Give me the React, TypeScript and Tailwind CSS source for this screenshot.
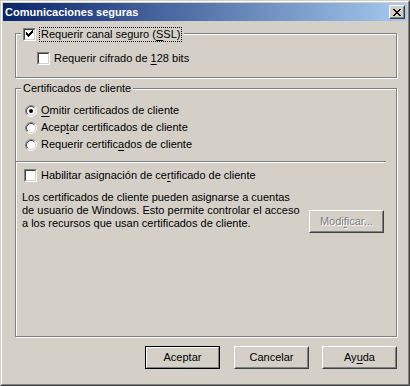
import React from "react";

const FACE = "#D4D0C8";

function Check({ checked = false }: { checked?: boolean }) {
  const rows: [number, number, number][] = [
    [7, 1, 1],
    [6, 2, 2],
    [1, 3, 1],
    [5, 3, 3],
    [1, 4, 2],
    [4, 4, 3],
    [1, 5, 5],
    [2, 6, 3],
    [3, 7, 1],
  ];
  return (
    <span className="block w-[13px] h-[13px] shrink-0 border border-t-[#808080] border-l-[#808080] border-b-white border-r-white">
      <span className="block w-full h-full border border-t-[#404040] border-l-[#404040] border-b-[#D4D0C8] border-r-[#D4D0C8] bg-white">
        {checked && (
          <svg width="9" height="9" viewBox="0 0 9 9" shapeRendering="crispEdges" className="block">
            {rows.map(([x, y, w], i) => (
              <rect key={i} x={x} y={y - 1} width={w} height={1} fill="#000" />
            ))}
          </svg>
        )}
      </span>
    </span>
  );
}

function Radio({ checked = false }: { checked?: boolean }) {
  return (
    <svg width="12" height="12" viewBox="0 0 12 12" className="block shrink-0">
      <circle cx="6" cy="6" r="5" fill="#fff" />
      <path d="M2.111 9.889 A5.5 5.5 0 0 1 9.889 2.111" stroke="#808080" strokeWidth="1" fill="none" />
      <path d="M9.889 2.111 A5.5 5.5 0 0 1 2.111 9.889" stroke="#fff" strokeWidth="1" fill="none" />
      <path d="M2.818 9.182 A4.5 4.5 0 0 1 9.182 2.818" stroke="#404040" strokeWidth="1" fill="none" />
      <path d="M9.182 2.818 A4.5 4.5 0 0 1 2.818 9.182" stroke="#D4D0C8" strokeWidth="1" fill="none" />
      {checked && <circle cx="6" cy="6" r="2" fill="#000" />}
    </svg>
  );
}

function U({ children }: { children: React.ReactNode }) {
  return <span className="underline underline-offset-[2px]">{children}</span>;
}

function Button({
  children,
  isDefault = false,
  disabled = false,
  className = "",
}: {
  children: React.ReactNode;
  isDefault?: boolean;
  disabled?: boolean;
  className?: string;
}) {
  const inner = (
    <div className="h-full border border-t-white border-l-white border-b-[#404040] border-r-[#404040]">
      <div className="h-full border border-t-[#D4D0C8] border-l-[#D4D0C8] border-b-[#808080] border-r-[#808080] flex items-center justify-center">
        <span
          className={
            disabled
              ? "text-[#808080] [text-shadow:1px_1px_0_#fff]"
              : "text-black"
          }
        >
          {children}
        </span>
      </div>
    </div>
  );
  if (isDefault) {
    return (
      <div className={`w-[75px] h-[23px] border border-black ${className}`}>
        <div className="h-full border border-t-white border-l-white border-b-[#808080] border-r-[#808080] flex items-center justify-center">
          <span className="text-black">{children}</span>
        </div>
      </div>
    );
  }
  return <div className={`w-[75px] h-[23px] ${className}`}>{inner}</div>;
}

function CloseGlyph() {
  const rows: [number, number][][] = [
    [[0, 2], [6, 2]],
    [[1, 2], [5, 2]],
    [[2, 4]],
    [[3, 2]],
    [[2, 4]],
    [[1, 2], [5, 2]],
    [[0, 2], [6, 2]],
  ];
  return (
    <svg width="8" height="7" viewBox="0 0 8 7" shapeRendering="crispEdges" className="block">
      {rows.flatMap((segs, y) =>
        segs.map(([x, w], i) => <rect key={`${y}-${i}`} x={x} y={y} width={w} height={1} fill="#000" />)
      )}
    </svg>
  );
}

export default function App() {
  return (
    <div
      className="w-[410px] h-[386px] bg-[#D4D0C8] border border-t-[#D4D0C8] border-l-[#D4D0C8] border-b-[#404040] border-r-[#404040] text-[11px] leading-[13px] text-black"
      style={{ fontFamily: '"Liberation Sans", Arial, sans-serif' }}
    >
      <div className="h-full border border-t-white border-l-white border-b-[#808080] border-r-[#808080] p-px flex flex-col">
        {/* Title bar */}
        <div className="h-[18px] shrink-0 flex items-center justify-between pl-[2px] pr-[2px] bg-[linear-gradient(to_right,#0A246A,#A6CAF0)]">
          <span className="text-white font-bold text-[11px] leading-[13px]">Comunicaciones seguras</span>
          <div className="w-[16px] h-[14px] border border-t-white border-l-white border-b-[#404040] border-r-[#404040] bg-[#D4D0C8]">
            <div className="h-full border border-t-[#D4D0C8] border-l-[#D4D0C8] border-b-[#808080] border-r-[#808080] flex items-start justify-start pl-[2px] pt-[2px]">
              <CloseGlyph />
            </div>
          </div>
        </div>

        {/* Body */}
        <div className="flex-1 flex flex-col pl-[12px]">
          {/* Group 1 */}
          <div className="relative mt-[12px] w-[382px] h-[45px] border border-[#808080] shadow-[inset_1px_1px_0_#fff,1px_1px_0_#fff]">
            <div className="absolute left-[5px] top-[-8px] px-[2px] bg-[#D4D0C8] flex items-center h-[17px]">
              <Check checked />
              <span className="ml-[3px] px-[1px] border border-dotted border-black leading-[13px]">
                Requerir canal seguro (<U>S</U>SL)
              </span>
            </div>
            <div className="pt-[18px] pl-[21px] flex items-center">
              <Check />
              <span className="ml-[4px]">
                Requerir cifrado de <U>1</U>28 bits
              </span>
            </div>
          </div>

          {/* Group 2 */}
          <div className="relative mt-[10px] w-[382px] h-[249px] border border-[#808080] shadow-[inset_1px_1px_0_#fff,1px_1px_0_#fff]">
            <div className="absolute left-[5px] top-[-7px] px-[2px] bg-[#D4D0C8] leading-[13px]">
              Certificados de cliente
            </div>

            <div className="pt-[15px] pl-[9px] flex flex-col gap-[4px]">
              <div className="flex items-center h-[13px]">
                <Radio checked />
                <span className="ml-[4px]">
                  <U>O</U>mitir certificados de cliente
                </span>
              </div>
              <div className="flex items-center h-[13px]">
                <Radio />
                <span className="ml-[4px]">
                  Acep<U>t</U>ar certificados de cliente
                </span>
              </div>
              <div className="flex items-center h-[13px]">
                <Radio />
                <span className="ml-[4px]">
                  Requerir certific<U>a</U>dos de cliente
                </span>
              </div>
            </div>

            <div className="mt-[10px] w-[370px] h-[2px] border-t border-t-[#808080] border-b border-b-white" />

            <div className="mt-[6px] pl-[8px] flex items-center">
              <Check />
              <span className="ml-[4px]">
                Habilitar asignación de ce<U>r</U>tificado de cliente
              </span>
            </div>

            <div className="mt-[9px] pl-[6px] pr-[12px] flex items-end justify-between">
              <p className="leading-[13px]">
                Los certificados de cliente pueden asignarse a cuentas
                <br />
                de usuario de Windows. Esto permite controlar el acceso
                <br />a los recursos que usan certificados de cliente.
              </p>
              <Button disabled className="mb-[-3px]">
                Modi<U>f</U>icar...
              </Button>
            </div>
          </div>

          {/* Buttons */}
          <div className="mt-[9px] flex w-[382px] justify-end">
            <Button isDefault>Aceptar</Button>
            <Button className="ml-[14px]">Cancelar</Button>
            <Button className="ml-[13px]">
              Ay<U>u</U>da
            </Button>
          </div>
        </div>
      </div>
    </div>
  );
}
